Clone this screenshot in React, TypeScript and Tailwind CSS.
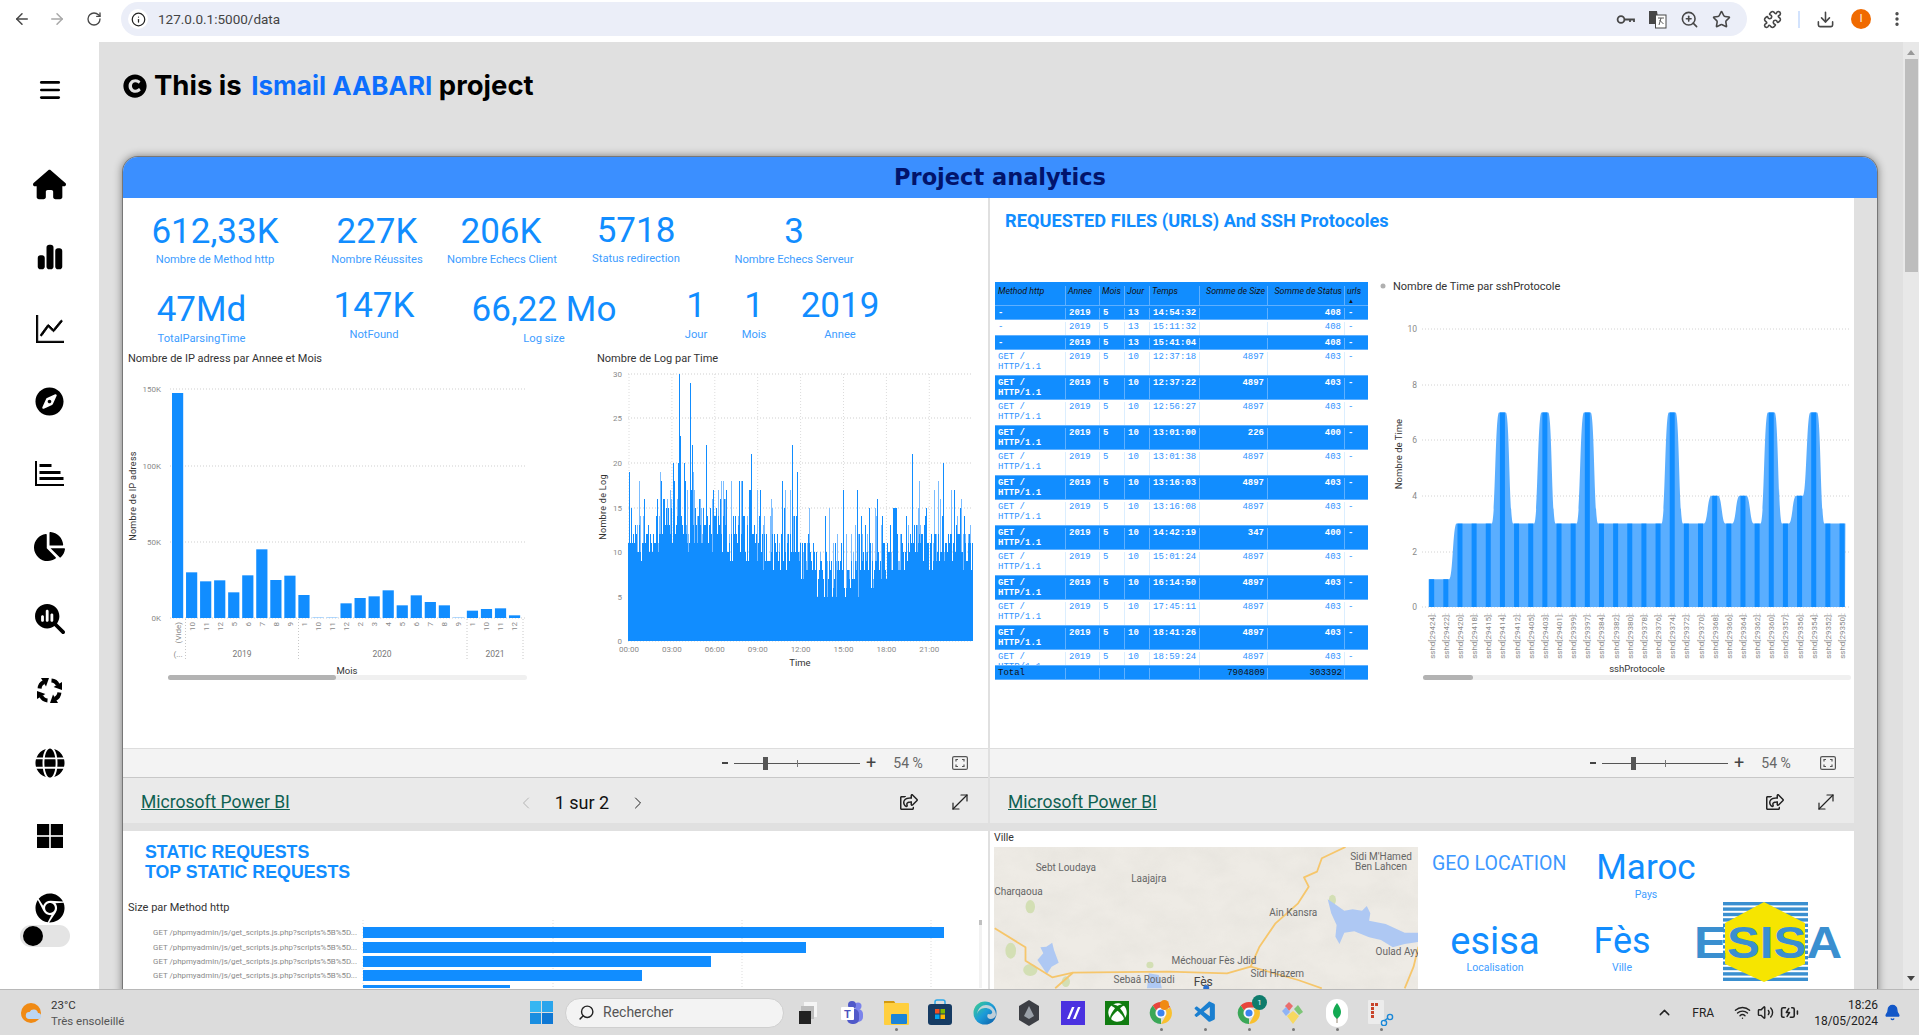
import React from "react";
import { ArrowLeft, ArrowRight, RotateCw, Info, ZoomIn, Star, Puzzle, Download, EllipsisVertical, MoveDiagonal, ChevronLeft, ChevronRight, ChevronUp, Wifi, Volume2, BatteryCharging, Bell, Search, Menu } from "lucide-react";
import { FaCompass, FaChartPie, FaGlobe, FaChrome, FaCopyright, FaRegShareSquare, FaXbox } from "react-icons/fa";
import { FaHouse, FaChartSimple, FaMagnifyingGlassChart } from "react-icons/fa6";
import { BsGraphUp } from "react-icons/bs";
import { VscVscode } from "react-icons/vsc";

const BLUE = "#118dff";

/* ---------- data ---------- */
const barTops = [580 - 1200, 397, 424, 421, 457, 406, 328, 420, 407, 465, 532, 532, 490, 474, 469, 451, 496, 466, 486, 496, 532, 512, 507, 505, 526];
const barLabels = ["(Vide)", "10", "11", "12", "5", "6", "7", "8", "9", "1", "10", "11", "12", "2", "3", "4", "5", "6", "7", "8", "9", "1", "10", "11", "12"];
const sshIds = [29424, 29422, 29420, 29418, 29415, 29414, 29412, 29405, 29403, 29401, 29399, 29397, 29384, 29382, 29380, 29378, 29376, 29374, 29372, 29370, 29368, 29366, 29364, 29362, 29360, 29357, 29356, 29354, 29352, 29350];
const sshVals = [1, 1, 3, 3, 3, 7, 3, 3, 7, 3, 3, 7, 3, 3, 3, 3, 3, 7, 3, 3, 4, 3, 4, 3, 7, 3, 4, 7, 3, 3];

const sshX = (i: number) => 1370 + (185 + 42.45 * i) / 3;
const sshY = (v: number) => 607 - 27.8 * v;
function areaPath() {
  let d = `M${sshX(0) - 3} 607 L${sshX(0) - 3} ${sshY(sshVals[0])}`;
  sshVals.forEach((v, i) => {
    const x = sshX(i);
    d += ` L${x + 3.4} ${sshY(v)}`;
    if (i < sshVals.length - 1) {
      const nx = sshX(i + 1) - 3.4;
      const ny = sshY(sshVals[i + 1]);
      const mx = (x + 3.4 + nx) / 2;
      d += ` C${mx} ${sshY(v)} ${mx} ${ny} ${nx} ${ny}`;
    }
  });
  d += ` L${sshX(29) + 3} 607 Z`;
  return d;
}

let seed = 12345;
const rnd = () => {
  seed = (seed * 1103515245 + 12345) & 0x7fffffff;
  return seed / 0x7fffffff;
};
function envelope(t: number) {
  const pts: [number, number][] = [[0, 10.5], [0.07, 12], [0.13, 14], [0.25, 12.5], [0.35, 11.5], [0.42, 11], [0.48, 11], [0.55, 8], [0.65, 7.5], [0.72, 9], [0.8, 11], [0.9, 11.5], [1, 11]];
  for (let i = 0; i < pts.length - 1; i++) {
    if (t <= pts[i + 1][0]) {
      const k = (t - pts[i][0]) / (pts[i + 1][0] - pts[i][0]);
      return pts[i][1] + (pts[i + 1][1] - pts[i][1]) * k;
    }
  }
  return 9;
}
const logY = (v: number) => 641 - 8.9 * v;
let logDark = "";
let logLight = "";
for (let x = 628.5; x < 973; x += 1) {
  const t = (x - 628) / 345;
  const e = envelope(t);
  const v = Math.round(e + (rnd() - 0.6) * 5);
  const r = rnd();
  const spike = Math.round(v + r * r * r * 8);
  logDark += `M${x} 641V${logY(Math.max(v, 3))}`;
  if (spike > v) (rnd() > 0.5 ? (logDark += `M${x} ${logY(v)}V${logY(spike)}`) : (logLight += `M${x} ${logY(v)}V${logY(spike)}`));
}
logDark += `M679.5 641V${logY(30)}M680.5 641V${logY(23)}M690.5 641V${logY(29)}M692.5 641V${logY(22)}M706.5 641V${logY(22)}M792.5 641V${logY(22)}M912.5 641V${logY(21)}M943.5 641V${logY(20)}`;

type Row = [string, number, number, string, string, string];
const rows: Row[] = [
  ["-", 5, 13, "14:54:32", "", "408"],
  ["-", 5, 13, "15:11:32", "", "408"],
  ["-", 5, 13, "15:41:04", "", "408"],
  ["GET / HTTP/1.1", 5, 10, "12:37:18", "4897", "403"],
  ["GET / HTTP/1.1", 5, 10, "12:37:22", "4897", "403"],
  ["GET / HTTP/1.1", 5, 10, "12:56:27", "4897", "403"],
  ["GET / HTTP/1.1", 5, 10, "13:01:00", "226", "400"],
  ["GET / HTTP/1.1", 5, 10, "13:01:38", "4897", "403"],
  ["GET / HTTP/1.1", 5, 10, "13:16:03", "4897", "403"],
  ["GET / HTTP/1.1", 5, 10, "13:16:08", "4897", "403"],
  ["GET / HTTP/1.1", 5, 10, "14:42:19", "347", "400"],
  ["GET / HTTP/1.1", 5, 10, "15:01:24", "4897", "403"],
  ["GET / HTTP/1.1", 5, 10, "16:14:50", "4897", "403"],
  ["GET / HTTP/1.1", 5, 10, "17:45:11", "4897", "403"],
  ["GET / HTTP/1.1", 5, 10, "18:41:26", "4897", "403"],
  ["GET / HTTP/1.1", 5, 10, "18:59:24", "4897", "403"],
];

/* ---------- small parts ---------- */
function Stat({ value, label, w, valueClass = "", labelClass = "mt-[3px]" }: { value: string; label: string; w: string; valueClass?: string; labelClass?: string }) {
  return (
    <div className={`${w} shrink-0 text-center`}>
      <div className={`text-[35px] leading-[36px] text-[#118dff] ${valueClass}`}>{value}</div>
      <div className={`text-[11.2px] leading-[14px] text-[#3d9dff] whitespace-nowrap ${labelClass}`}>{label}</div>
    </div>
  );
}

function ZoomBar({ pr }: { pr: string }) {
  return (
    <div className={`h-[29px] bg-[#f3f3f3] border-t border-[#dddddd] flex items-center justify-end ${pr}`}>
      <span className="w-[6px] h-[2px] bg-[#444444] mr-[6px]" />
      <div className="relative w-[126px] h-px bg-[#555555] mr-[6px]">
        <span className="absolute left-[29px] -top-[6px] w-[5px] h-[13px] bg-[#555555]" />
        <span className="absolute left-[63px] -top-[3px] w-px h-[7px] bg-[#777777]" />
      </div>
      <span className="text-[18px] leading-none text-[#444444] w-[10px] text-center mr-[17px]">+</span>
      <span className="text-[14px] text-[#666666] w-[30px] text-center mr-[29px]">54 %</span>
      <svg width="16" height="14" viewBox="0 0 16 14" fill="none" stroke="#555" strokeWidth="1.2">
        <rect x="0.6" y="0.6" width="14.8" height="12.8" rx="1.5" />
        <path d="M6 3.5H4V5.5M10 3.5H12V5.5M6 10.5H4V8.5M10 10.5H12V8.5" />
      </svg>
    </div>
  );
}

function PbiBar({ pager, pl, pr }: { pager?: boolean; pl: string; pr: string }) {
  return (
    <div className={`h-[46px] bg-[#eaeaea] border-t border-[#c8c8c8] flex items-center pt-[5px] ${pl} ${pr}`}>
      <a className="text-[17.5px] text-[#0f6152] underline leading-none w-[150px] whitespace-nowrap">Microsoft Power BI</a>
      {pager && (
        <div className="flex items-center ml-[225px] -mt-[1px]">
          <ChevronLeft size={20} strokeWidth={1} className="text-[#aaaaaa]" />
          <span className="text-[18px] text-[#111111] w-[92px] text-center">1 sur 2</span>
          <ChevronRight size={20} strokeWidth={1.2} className="text-[#222222]" />
        </div>
      )}
      <div className="ml-auto flex items-center gap-[30px] -mt-[3px]">
        <FaRegShareSquare size={18} className="text-[#222222]" />
        <MoveDiagonal size={24} strokeWidth={1.2} className="text-[#222222]" />
      </div>
    </div>
  );
}

function BarChart() {
  const xs = barTops.map((_, i) => 172 + i * 14.04);
  return (
    <svg width="467" height="320" viewBox="123 366 467 320" className="block" fontFamily="Roboto, sans-serif">
      {[[389, "150K"], [466, "100K"], [542, "50K"], [618, "0K"]].map(([y, l]) => (
        <g key={String(l)}>
          <line x1="170" x2="525" y1={y as number} y2={y as number} stroke="#cfcfcf" strokeWidth="1" strokeDasharray="1 2" />
          <text x="161" y={(y as number) + 3} fontSize="8" fill="#8a8a8a" textAnchor="end">{l}</text>
        </g>
      ))}
      {barTops.map((t, i) => {
        const top = i === 0 ? 393 : 440 + t / 3;
        return <rect key={i} x={xs[i]} y={top} width="11.2" height={618 - top} fill={i === 10 || i === 11 || i === 20 ? "#8cc6ff" : BLUE} />;
      })}
      {barLabels.map((l, i) => (
        <text key={i} transform={`translate(${xs[i] + 8.5} 622) rotate(-90)`} fontSize="8" fill="#8a8a8a" textAnchor="end">{l}</text>
      ))}
      {[185.5, 298.5, 467, 523].map((x) => (
        <line key={x} x1={x} x2={x} y1="619" y2="661" stroke="#c8c8c8" strokeDasharray="1 2" />
      ))}
      <text x="178" y="657" fontSize="8" fill="#8a8a8a" textAnchor="middle">(...</text>
      <text x="242" y="657" fontSize="8.5" fill="#777" textAnchor="middle">2019</text>
      <text x="382" y="657" fontSize="8.5" fill="#777" textAnchor="middle">2020</text>
      <text x="495" y="657" fontSize="8.5" fill="#777" textAnchor="middle">2021</text>
      <text x="347" y="674" fontSize="9.5" fill="#333" textAnchor="middle">Mois</text>
      <rect x="168" y="675" width="359" height="5" rx="2.5" fill="#f0f0f0" />
      <rect x="168" y="675" width="168" height="5" rx="2.5" fill="#b3b3b3" />
      <text transform="translate(136 496) rotate(-90)" fontSize="9" fill="#333" textAnchor="middle" letterSpacing="0.3">Nombre de IP adress</text>
    </svg>
  );
}

function LogChart() {
  const times = ["00:00", "03:00", "06:00", "09:00", "12:00", "15:00", "18:00", "21:00"];
  return (
    <svg width="398" height="320" viewBox="590 366 398 320" className="block" fontFamily="Roboto, sans-serif">
      {[[374, "30"], [418, "25"], [463, "20"], [508, "15"], [552, "10"], [597, "5"], [641, "0"]].map(([y, l]) => (
        <g key={String(l)}>
          <line x1="628" x2="973" y1={y as number} y2={y as number} stroke="#cfcfcf" strokeDasharray="1 2" />
          <text x="622" y={(y as number) + 3} fontSize="8" fill="#8a8a8a" textAnchor="end">{l}</text>
        </g>
      ))}
      {times.map((t, i) => (
        <g key={t}>
          <line x1={629 + i * 42.9} x2={629 + i * 42.9} y1="374" y2="641" stroke="#dcdcdc" strokeDasharray="1 2" />
          <text x={629 + i * 42.9} y="652" fontSize="8" fill="#8a8a8a" textAnchor="middle">{t}</text>
        </g>
      ))}
      <path d={logLight} stroke="#7cbdff" strokeWidth="1" fill="none" shapeRendering="crispEdges" />
      <path d={logDark} stroke={BLUE} strokeWidth="1" fill="none" shapeRendering="crispEdges" />
      <text x="800" y="666" fontSize="9.5" fill="#333" textAnchor="middle">Time</text>
      <text transform="translate(606 507) rotate(-90)" fontSize="9" fill="#333" textAnchor="middle" letterSpacing="0.3">Nombre de Log</text>
    </svg>
  );
}

function SshChart() {
  return (
    <svg width="486" height="400" viewBox="1368 282 486 400" className="block" fontFamily="Roboto, sans-serif">
      <circle cx="1383" cy="286" r="2.5" fill="#b0b0b0" />
      <text x="1393" y="290" fontSize="11" fill="#333">Nombre de Time par sshProtocole</text>
      {[[329, "10"], [385, "8"], [440, "6"], [496, "4"], [552, "2"], [607, "0"]].map(([y, l]) => (
        <g key={String(l)}>
          <line x1="1422" x2="1849" y1={y as number} y2={y as number} stroke="#d2d2d2" strokeDasharray="1 2" />
          <text x="1417" y={(y as number) + 3} fontSize="8.5" fill="#8a8a8a" textAnchor="end">{l}</text>
        </g>
      ))}
      <path d={areaPath()} fill="#5aaeff" />
      {sshVals.map((v, i) => (
        <rect key={i} x={sshX(i) - 2.5} y={sshY(v)} width="5" height={607 - sshY(v)} fill={BLUE} />
      ))}
      {sshIds.map((id, i) => (
        <text key={id} transform={`translate(${sshX(i) + 3} 613) rotate(-90)`} fontSize="8" fill="#8a8a8a" textAnchor="end">{`sshd[${id}]:`}</text>
      ))}
      <text x="1637" y="672" fontSize="9.5" fill="#333" textAnchor="middle">sshProtocole</text>
      <rect x="1423" y="675" width="428" height="5" rx="2.5" fill="#f0f0f0" />
      <rect x="1423" y="675" width="50" height="5" rx="2.5" fill="#b3b3b3" />
      <text transform="translate(1402 454) rotate(-90)" fontSize="9.5" fill="#333" textAnchor="middle">Nombre de Time</text>
    </svg>
  );
}

const gridCols = "grid grid-cols-[71px_34px_25px_25px_50px_68px_77px_23px]";

function LogTable() {
  const head = "border-r border-[#5fb0ff] px-[2px]";
  return (
    <div className="w-[373px] ml-[5px] shrink-0 text-[9px] leading-[10px] font-['Liberation_Mono',monospace]">
      <div className={`${gridCols} h-[23px] bg-[#118dff] text-[#111111] italic font-['Roboto',sans-serif] leading-[11px] pt-[4px] text-[8.8px] whitespace-nowrap`}>
        <span className={`${head} pl-[3px]`}>Method http</span>
        <span className={head}>Annee</span>
        <span className={head}>Mois</span>
        <span className={head}>Jour</span>
        <span className={head}>Temps</span>
        <span className={`${head} text-right`}>Somme de Size</span>
        <span className={`${head} text-right`}>Somme de Status</span>
        <span className="px-[2px] relative">urls<span className="absolute left-[3px] top-[12px] text-[6px] leading-none">▲</span></span>
      </div>
      <div className="h-[360px] overflow-hidden flex flex-col">
        {rows.map((r, i) => {
          const on = i % 2 === 0;
          const cell = `border-r ${on ? "border-[#5fb0ff]" : "border-[#dbeeff]"} px-[3px] overflow-hidden`;
          return (
            <div
              key={i}
              className={`${gridCols} ${i < 3 ? "h-[15px]" : "h-[25px]"} shrink-0 pt-[2px] ${on ? "bg-[#118dff] text-white font-bold border-y border-[#5fb0ff]" : "bg-white text-[#2f93ff]"}`}
            >
              <span className={cell}>{r[0]}</span>
              <span className={cell}>2019</span>
              <span className={cell}>{r[1]}</span>
              <span className={cell}>{r[2]}</span>
              <span className={cell}>{r[3]}</span>
              <span className={`${cell} text-right`}>{r[4]}</span>
              <span className={`${cell} text-right`}>{r[5]}</span>
              <span className="px-[3px]">-</span>
            </div>
          );
        })}
      </div>
      <div className={`${gridCols} h-[15px] bg-[#118dff] text-[#111111] pt-[2px] border-y border-[#5fb0ff]`}>
        <span className={`${head} pl-[3px]`}>Total</span>
        <span className={head} />
        <span className={head} />
        <span className={head} />
        <span className={head} />
        <span className={`${head} text-right`}>7904809</span>
        <span className={`${head} text-right`}>303392</span>
        <span />
      </div>
    </div>
  );
}

const zx = (z: number) => 990 + z / 1.688;
const zy = (z: number) => 740 + z / 3;
const mp = (pts: number[][], close = false) =>
  pts.map((p, i) => `${i ? "L" : "M"}${zx(p[0]).toFixed(1)} ${zy(p[1]).toFixed(1)}`).join(" ") + (close ? " Z" : "");

function MapView() {
  const labels: [string, number, number][] = [
    ["Sebt Loudaya", 128, 394],
    ["Laajajra", 268, 426],
    ["Charqaoua", 48, 466],
    ["Sidi M'Hamed", 660, 360],
    ["Ben Lahcen", 660, 390],
    ["Ain Kansra", 512, 527],
    ["Oulad Ayy", 688, 644],
    ["Méchouar Fès Jdid", 378, 672],
    ["Sidi Hrazem", 485, 712],
    ["Sebaâ Rouadi", 260, 730],
  ];
  return (
    <svg width="424" height="142" viewBox="994 847 424 142" className="block" fontFamily="Roboto, sans-serif">
      <defs>
        <filter id="hills" x="0" y="0" width="100%" height="100%">
          <feTurbulence type="fractalNoise" baseFrequency="0.03 0.045" numOctaves="4" seed="7" />
          <feColorMatrix values="0 0 0 0 0.6  0 0 0 0 0.59  0 0 0 0 0.55  0.8 0 0 0 -0.25" />
        </filter>
      </defs>
      <rect x="994" y="847" width="424" height="142" fill="#eeebe5" />
      <rect x="994" y="847" width="424" height="142" filter="url(#hills)" opacity="0.35" />
      {[[68, 500, 8, 10], [35, 632, 9, 12], [68, 690, 12, 9], [128, 725, 7, 8], [578, 480, 6, 8], [270, 675, 6, 5]].map((g, i) => (
        <ellipse key={i} cx={zx(g[0])} cy={zy(g[1])} rx={g[2] / 1.688} ry={g[3] / 1.5} fill="#d3dfb4" />
      ))}
      <path d={mp([[570, 478], [582, 492], [598, 512], [612, 508], [628, 512], [636, 498], [642, 520], [640, 542], [668, 552], [700, 578], [723, 578], [723, 606], [700, 612], [680, 622], [660, 600], [640, 592], [615, 574], [598, 578], [590, 612], [583, 590], [585, 555], [576, 520]], true)} fill="#aec8f3" />
      <path d={mp([[85, 622], [95, 620], [105, 608], [108, 630], [116, 668], [104, 680], [96, 702], [88, 680], [80, 660], [90, 640]], true)} fill="#aec8f3" />
      <path d={mp([[268, 700], [285, 705], [290, 745], [265, 745]], true)} fill="#aec8f3" />
      <g fill="none" stroke="#f6c66b" strokeWidth="1.8" strokeLinejoin="round">
        <path d={mp([[600, 321], [560, 355], [552, 395], [530, 412], [538, 440], [520, 490], [482, 550], [455, 620], [440, 680], [400, 700], [300, 695], [140, 698], [110, 745]])} />
        <path d={mp([[8, 565], [60, 622], [60, 662], [105, 712], [140, 698]])} />
        <path d={mp([[440, 680], [520, 720], [560, 745]])} />
        <path d={mp([[723, 620], [715, 680], [700, 745]])} />
      </g>
      {labels.map(([t, x, y]) => (
        <text key={t} x={zx(x)} y={zy(y)} fontSize="10" fill="#666" textAnchor="middle">{t}</text>
      ))}
      <text x={zx(360)} y={zy(738)} fontSize="12" fill="#444" textAnchor="middle">Fès</text>
      <circle cx={zx(365)} cy={zy(744)} r="3" fill="#2a6fd0" />
    </svg>
  );
}

function EsisaLogo() {
  const stripes = [];
  for (let y = 0; y < 80; y += 5.4) stripes.push(y);
  return (
    <svg width="148" height="80" viewBox="0 0 148 80" className="block shrink-0">
      {stripes.map((y) => (
        <rect key={y} x="29" y={y} width="85" height="3.4" fill="#3a8fd0" />
      ))}
      <polygon points="70,0 111,21 111,62 70,80 31,62 31,21" fill="#f6e500" />
      <text x="0" y="56" fontFamily="Liberation Sans, sans-serif" fontWeight="700" fontSize="45" fill="#3a8fd0" textLength="148" lengthAdjust="spacingAndGlyphs">ESISA</text>
    </svg>
  );
}

function LoopArrows() {
  return (
    <svg width="27" height="27" viewBox="0 0 27 27" className="text-black">
      {[0, 90, 180, 270].map((a) => (
        <g key={a} transform={`rotate(${a} 13.5 13.5)`}>
          <path d="M3.6 11.5C3.8 8.5 5.2 6.4 8 5.2" fill="none" stroke="currentColor" strokeWidth="4" />
          <path d="M5 1L13 1L10 9.4z" fill="currentColor" />
        </g>
      ))}
    </svg>
  );
}

function AxisBars() {
  return (
    <svg width="29" height="25" viewBox="0 0 29 25" fill="currentColor">
      <path d="M0 0H2V23H29V25H0Z" />
      <rect x="4.5" y="3" width="12" height="3" />
      <rect x="4.5" y="10" width="21" height="3" />
      <rect x="4.5" y="16" width="24" height="3" />
    </svg>
  );
}

/* ---------- taskbar icons ---------- */
function ChromeIcon({ size = 24 }: { size?: number }) {
  return (
    <svg width={size} height={size} viewBox="0 0 24 24">
      <path d="M12 1a11 11 0 0 1 9.5 5.5H12a5.5 5.5 0 0 0-5 3L3.7 4.6A11 11 0 0 1 12 1z" fill="#e8453c" />
      <path d="M21.5 6.5A11 11 0 0 1 12 23l4.7-8.2A5.5 5.5 0 0 0 16.5 9z" fill="#f9c02e" />
      <path d="M12 23A11 11 0 0 1 3.7 4.6L7 9.5a5.5 5.5 0 0 0 5 8z" fill="#3aa757" />
      <circle cx="12" cy="12" r="4.3" fill="#3b83ef" stroke="#fff" strokeWidth="1.4" />
    </svg>
  );
}

function TaskIcon({ children, dot = false, w }: { children: React.ReactNode; dot?: boolean; w: string }) {
  return (
    <div className={`${w} shrink-0 h-full relative flex items-center justify-center`}>
      {children}
      {dot && <span className="absolute bottom-[4px] left-1/2 -ml-[1.5px] w-[3px] h-[3px] rounded-full bg-[#777777]" />}
    </div>
  );
}

function Taskbar() {
  return (
    <div className="h-[46px] shrink-0 bg-[#dcdcdc] border-t border-[#b8b8b8] flex items-center relative z-10">
      <div className="w-[530px] shrink-0 flex items-center pl-[20px]">
        <svg width="24" height="24" viewBox="0 0 24 24" className="shrink-0">
          <circle cx="11" cy="12" r="10" fill="#f08a14" />
          <path d="M9 18a3.5 3.5 0 0 1 .6-7 4.5 4.5 0 0 1 8.4 1 3 3 0 0 1 .2 6z" fill="#bcd6f2" />
        </svg>
        <div className="ml-[7px] text-[11.5px] leading-[16px] text-[#333333]">
          <div>23°C</div>
          <div className="text-[#555555]">Très ensoleillé</div>
        </div>
      </div>
      <svg width="23" height="23" viewBox="0 0 23 23" className="shrink-0">
        <rect x="0" y="0" width="11" height="11" fill="#35b6f2" />
        <rect x="12" y="0" width="11" height="11" fill="#2aa5ec" />
        <rect x="0" y="12" width="11" height="11" fill="#1a8ee0" />
        <rect x="12" y="12" width="11" height="11" fill="#0f78d4" />
      </svg>
      <div className="ml-[12px] w-[219px] h-[30px] shrink-0 rounded-full bg-[#f3f3f3] border border-[#cfcfcf] flex items-center pl-[12px]">
        <Search size={17} strokeWidth={2} className="text-[#222222] -scale-x-100" />
        <span className="ml-[8px] text-[14px] text-[#555555]">Rechercher</span>
      </div>
      <div className="ml-[2px] h-full flex items-center">
        <TaskIcon w="w-[44px]">
          <svg width="20" height="24" viewBox="0 0 20 24">
            <rect x="6" y="1" width="13" height="15" fill="#f5f5f5" />
            <rect x="3" y="5" width="13" height="13" fill="#bdbdbd" />
            <rect x="1" y="10" width="12" height="13" fill="#222" />
          </svg>
        </TaskIcon>
        <TaskIcon w="w-[44px]">
          <svg width="26" height="26" viewBox="0 0 26 26">
            <circle cx="19" cy="6" r="3.5" fill="#7b83eb" />
            <rect x="12" y="9" width="12" height="13" rx="5" fill="#7b83eb" />
            <circle cx="13" cy="5" r="4" fill="#5059c9" />
            <rect x="8" y="9" width="12" height="15" rx="5" fill="#5059c9" />
            <rect x="2" y="7" width="13" height="13" rx="1" fill="#fff" />
            <text x="8.5" y="18" fontSize="11" fontWeight="700" fill="#4b53bc" textAnchor="middle" fontFamily="Roboto, sans-serif">T</text>
          </svg>
        </TaskIcon>
        <TaskIcon w="w-[44px]" dot>
          <svg width="25" height="26" viewBox="0 0 25 26">
            <path d="M0 1h10l2 3h-12z" fill="#d39a10" />
            <rect x="0" y="3" width="25" height="22" rx="1" fill="#ffcf3f" />
            <rect x="7" y="14" width="16" height="10" rx="1" fill="#1b84d8" />
          </svg>
        </TaskIcon>
        <TaskIcon w="w-[44px]">
          <svg width="24" height="27" viewBox="0 0 24 27">
            <path d="M7 6V3a2 2 0 0 1 2-2h6a2 2 0 0 1 2 2v3" fill="none" stroke="#28a8ea" strokeWidth="1.5" />
            <rect x="0" y="5" width="24" height="21" rx="3" fill="#163b63" />
            <rect x="7" y="10" width="4.5" height="4.5" fill="#f25022" />
            <rect x="12.5" y="10" width="4.5" height="4.5" fill="#7fba00" />
            <rect x="7" y="15.5" width="4.5" height="4.5" fill="#00a4ef" />
            <rect x="12.5" y="15.5" width="4.5" height="4.5" fill="#ffb900" />
          </svg>
        </TaskIcon>
        <TaskIcon w="w-[45px]">
          <svg width="24" height="24" viewBox="0 0 24 24">
            <defs>
              <linearGradient id="edgeG" x1="0" y1="0" x2="1" y2="1">
                <stop offset="0" stopColor="#3fd28a" />
                <stop offset="0.5" stopColor="#1c9bd8" />
                <stop offset="1" stopColor="#0c59a4" />
              </linearGradient>
            </defs>
            <circle cx="12" cy="12" r="11.5" fill="url(#edgeG)" />
            <path d="M23 14c-1 4-6 5-8 3-1-1-1-3 0-4 1 0 3 1 4-1 1-2-2-5-7-5-4 0-7 3-8 6 1-6 5-9 9-9 6 0 10 5 10 10z" fill="#dcdcdc" opacity="0.85" />
          </svg>
        </TaskIcon>
        <TaskIcon w="w-[44px]">
          <svg width="22" height="26" viewBox="0 0 22 26">
            <path d="M11 0l10 6v14l-10 6-10-6V6z" fill="#3d3f45" />
            <path d="M11 6l5 10-5 3-5-3z" fill="#9aa0a8" />
          </svg>
        </TaskIcon>
        <TaskIcon w="w-[44px]">
          <svg width="24" height="24" viewBox="0 0 24 24">
            <rect width="24" height="24" fill="#4b32e0" />
            <path d="M6 18l5-12h2.5L8.5 18zM12 18l5-12h2.5l-5 12z" fill="#fff" />
          </svg>
        </TaskIcon>
        <TaskIcon w="w-[44px]">
          <div className="w-[24px] h-[24px] bg-[#107c10] flex items-center justify-center">
            <FaXbox size={19} className="text-white" />
          </div>
        </TaskIcon>
        <TaskIcon w="w-[44px]" dot>
          <div className="relative">
            <ChromeIcon />
            <span className="absolute -top-[1px] right-[4px] w-[9px] h-[10px] rounded-full bg-[#f08a14]" />
          </div>
        </TaskIcon>
        <TaskIcon w="w-[44px]" dot>
          <VscVscode size={25} className="text-[#1a7fd0]" />
        </TaskIcon>
        <TaskIcon w="w-[44px]" dot>
          <div className="relative">
            <ChromeIcon />
            <span className="absolute -top-[6px] -right-[6px] w-[15px] h-[15px] rounded-full bg-[#0f7c6c] text-white text-[8px] leading-[15px] text-center">1</span>
          </div>
        </TaskIcon>
        <TaskIcon w="w-[44px]" dot>
          <svg width="26" height="26" viewBox="0 0 26 26">
            <path d="M9 2l4 4-4 5-4-5z" fill="#ea6d6d" />
            <path d="M2 11l4-4 4 5-4 4z" fill="#8fb3f5" />
            <path d="M14 9l4-4 5 7-4 3z" fill="#7cc576" />
            <path d="M7 16l6-5 6 5-6 8z" fill="#f6d860" />
          </svg>
        </TaskIcon>
        <TaskIcon w="w-[44px]" dot>
          <div className="w-[22px] h-[28px] rounded-full bg-white flex items-center justify-center">
            <svg width="10" height="20" viewBox="0 0 10 20">
              <path d="M5 0c3 4 4 7 4 9 0 4-3 6-4 7-1-1-4-3-4-7 0-2 1-5 4-9z" fill="#13aa52" />
              <rect x="4.6" y="15" width="0.8" height="5" fill="#7a6a4f" />
            </svg>
          </div>
        </TaskIcon>
        <TaskIcon w="w-[44px]" dot>
          <svg width="26" height="26" viewBox="0 0 26 26">
            <rect x="0" y="0" width="16" height="24" rx="1" fill="#ececec" />
            <path d="M3 3h3v3H3zM7 3h3v3H7zM3 7h3v3H3zM3 11h3v3H3zM3 15h3v3H3z" fill="#c8452c" />
            <circle cx="22" cy="17" r="2.6" fill="none" stroke="#1a88d8" strokeWidth="1.4" />
            <circle cx="16" cy="23" r="2.6" fill="none" stroke="#1a88d8" strokeWidth="1.4" />
            <path d="M20 18l-4 3" stroke="#1a88d8" strokeWidth="1.4" />
          </svg>
        </TaskIcon>
      </div>
      <div className="ml-auto flex items-center pr-[18px]">
        <ChevronUp size={17} className="text-[#222222]" />
        <span className="ml-[19px] text-[12px] text-[#222222]">FRA</span>
        <Wifi size={17} className="ml-[20px] text-[#222222]" />
        <Volume2 size={17} className="ml-[6px] text-[#222222]" />
        <BatteryCharging size={19} className="ml-[6px] text-[#222222]" />
        <div className="ml-[15px] text-right text-[12px] leading-[16px] text-[#222222]">
          <div>18:26</div>
          <div>18/05/2024</div>
        </div>
        <Bell size={17} fill="#1257c8" className="ml-[6px] text-[#1257c8]" />
      </div>
    </div>
  );
}

/* ---------- browser / page ---------- */
function Toolbar() {
  return (
    <div className="h-[42px] shrink-0 bg-white flex items-center relative">
      <div className="flex items-center pl-[13px] -mt-[4px]">
        <ArrowLeft size={18} strokeWidth={2} className="text-[#474747]" />
        <ArrowRight size={18} strokeWidth={2} className="ml-[17px] text-[#a8a8a8]" />
        <RotateCw size={16} strokeWidth={2} className="ml-[20px] text-[#474747]" />
      </div>
      <div className="ml-[19px] w-[1626px] h-[34px] -mt-[4px] shrink-0 rounded-full bg-[#ebeef8] flex items-center pl-[6px]">
        <div className="w-[20px] h-[20px] rounded-full bg-white flex items-center justify-center ml-[1px]">
          <Info size={15} strokeWidth={2} className="text-[#222222]" />
        </div>
        <span className="ml-[10px] text-[13.5px] text-[#444444]">127.0.0.1:5000/data</span>
        <div className="ml-auto flex items-center gap-[13px] pr-[16px] text-[#474747]">
          <svg width="19" height="19" viewBox="0 0 19 19" fill="none" stroke="currentColor" strokeWidth="1.8">
            <circle cx="5" cy="9.5" r="3.4" />
            <path d="M8.5 9.5H18V12M14 9.5V12" />
          </svg>
          <svg width="19" height="19" viewBox="0 0 19 19">
            <path d="M1 1h8l2 13H1z" fill="#474747" />
            <rect x="7.5" y="5" width="10.5" height="13" fill="#fff" stroke="#474747" strokeWidth="1" />
            <path d="M10 8h6M13 8l-2 7M11.5 10l4 4" stroke="#474747" strokeWidth="0.9" />
          </svg>
          <ZoomIn size={19} strokeWidth={2} />
          <Star size={19} strokeWidth={2} />
        </div>
      </div>
      <div className="ml-[16px] flex items-center -mt-[4px] text-[#474747]">
        <Puzzle size={19} strokeWidth={2} />
        <span className="ml-[16px] w-[2px] h-[17px] bg-[#d3e3fd]" />
        <Download size={19} strokeWidth={2} className="ml-[16px]" />
        <span className="ml-[16px] w-[20px] h-[20px] rounded-full bg-[#f06a00] text-white text-[10px] leading-[20px] text-center">I</span>
        <EllipsisVertical size={18} strokeWidth={2.5} className="ml-[17px]" />
      </div>
    </div>
  );
}

function Sidebar() {
  const icons = [
    <FaHouse size={33} />,
    <FaChartSimple size={28} />,
    <BsGraphUp size={28} stroke="currentColor" strokeWidth={0.5} />,
    <FaCompass size={29} />,
    <AxisBars />,
    <FaChartPie size={31} />,
    <FaMagnifyingGlassChart size={30} />,
    <LoopArrows />,
    <FaGlobe size={30} />,
    <svg width="26" height="24" viewBox="0 0 26 24" fill="currentColor">
      <rect x="0" y="0" width="12.2" height="11.2" />
      <rect x="13.8" y="0" width="12.2" height="11.2" />
      <rect x="0" y="12.8" width="12.2" height="11.2" />
      <rect x="13.8" y="12.8" width="12.2" height="11.2" />
    </svg>,
    <FaChrome size={30} />,
  ];
  return (
    <div className="w-[99px] shrink-0 bg-white flex flex-col items-center text-black">
      <Menu size={26} strokeWidth={2.5} className="mt-[35px]" />
      <div className="mt-[45px] flex flex-col items-center">
        {icons.map((ic, i) => (
          <div key={i} className="h-[72.4px] flex items-center justify-center">{ic}</div>
        ))}
      </div>
      <div className="-mt-[19px] -ml-[10px] w-[50px] h-[22px] rounded-full bg-[#e4e4e4] relative shrink-0">
        <span className="absolute left-[3px] top-[1px] w-[20px] h-[20px] rounded-full bg-black" />
      </div>
    </div>
  );
}

export default function App() {
  const staticLabel = "GET /phpmyadmin/js/get_scripts.js.php?scripts%5B%5D...";
  const hbars = [[928, 944], [943, 806], [957, 711], [971, 642], [986, 510]];
  return (
    <div className="w-[1919px] h-[1035px] overflow-hidden flex flex-col bg-[#e0e0e0] font-['Roboto',sans-serif]">
      <Toolbar />
      <div className="flex-1 min-h-0 flex overflow-hidden">
        <Sidebar />
        <main className="flex-1 min-w-0 overflow-hidden pl-[23px] pr-[25px]">
          <div className="h-[114px] flex items-center gap-[7px] pb-[26px] pl-[1px]">
            <FaCopyright size={24} className="text-black" />
            <h1 className="text-[27.5px] leading-none font-bold text-black font-['Inter',sans-serif]">
              This is <span className="ml-[3px] text-[26px] text-[#0d6efd]">Ismail AABARI</span> project
            </h1>
          </div>
          <section className="border border-[#777777] border-b-0 rounded-t-[16px] overflow-hidden shadow-[0_0_8px_rgba(0,0,0,0.45)] bg-[#e0e0e0]">
            <div className="h-[41px] bg-[#3b8fff] flex items-center justify-center">
              <h2 className="text-[22.5px] font-bold text-[#02146b] font-['DejaVu_Sans',sans-serif]">Project analytics</h2>
            </div>
            <div className="flex gap-[2px] h-[800px] pr-[23px]">
              {/* left column */}
              <div className="w-[865px] shrink-0">
                <div className="h-[550px] bg-white overflow-hidden pt-[16px]">
                  <div className="flex">
                    <Stat w="w-[184px]" value="612,33K" label="Nombre de Method http" />
                    <Stat w="w-[140px]" value="227K" label="Nombre  Réussites" />
                    <Stat w="w-[108px]" value="206K" label="Nombre Echecs Client" />
                    <Stat w="w-[162px]" value="5718" label="Status redirection" valueClass="-mt-[1px]" />
                    <Stat w="w-[154px]" value="3" label="Nombre Echecs Serveur" />
                  </div>
                  <div className="flex mt-[21px]">
                    <Stat w="w-[157px]" value="47Md" label="TotalParsingTime" valueClass="mt-[4px]" labelClass="mt-[4px]" />
                    <Stat w="w-[188px]" value="147K" label="NotFound" labelClass="mt-[4px]" />
                    <Stat w="w-[152px]" value="66,22 Mo" label="Log size" valueClass="mt-[4px]" labelClass="mt-[4px]" />
                    <div className="w-[46px] shrink-0" />
                    <Stat w="w-[60px]" value="1" label="Jour" labelClass="mt-[4px]" />
                    <Stat w="w-[56px]" value="1" label="Mois" labelClass="mt-[4px]" />
                    <Stat w="w-[116px]" value="2019" label="Annee" labelClass="mt-[4px]" />
                  </div>
                  <div className="flex mt-[6px]">
                    <div className="w-[467px] shrink-0">
                      <div className="pl-[5px] text-[11px] leading-[14px] text-[#333333]">Nombre de IP adress par Annee et Mois</div>
                      <BarChart />
                    </div>
                    <div className="w-[398px] shrink-0">
                      <div className="pl-[7px] text-[11px] leading-[14px] text-[#333333]">Nombre de Log par Time</div>
                      <LogChart />
                    </div>
                  </div>
                </div>
                <ZoomBar pr="pr-[20px]" />
                <PbiBar pager pl="pl-[18px]" pr="pr-[16px]" />
                <div className="mt-[8px] h-[158px] bg-white overflow-hidden pt-[11px]">
                  <div className="pl-[22px] text-[17.8px] leading-[20px] font-bold text-[#118dff] font-['Liberation_Sans',sans-serif]">
                    <div>STATIC REQUESTS</div>
                    <div>TOP STATIC REQUESTS</div>
                  </div>
                  <div className="mt-[19px] pl-[5px] text-[11px] leading-[14px] text-[#333333]">Size par Method http</div>
                  <svg width="865" height="73" viewBox="123 916 865 73" className="block" fontFamily="Roboto, sans-serif">
                    {[363, 553, 742, 931].map((x) => (
                      <line key={x} x1={x} x2={x} y1="921" y2="989" stroke="#dddddd" strokeDasharray="1 2" />
                    ))}
                    {hbars.map(([y, x2]) => (
                      <g key={y}>
                        <text x="357" y={y + 8} fontSize="8" fill="#8a8a8a" textAnchor="end" textLength="204" lengthAdjust="spacingAndGlyphs">{staticLabel}</text>
                        <rect x="363" y={y} width={x2 - 363} height="11" fill={BLUE} />
                      </g>
                    ))}
                    <rect x="979" y="921" width="3" height="68" fill="#f2f2f2" />
                    <rect x="979" y="921" width="3" height="5" fill="#c0c0c0" />
                  </svg>
                </div>
              </div>
              {/* right column */}
              <div className="w-[864px] shrink-0">
                <div className="h-[550px] bg-white overflow-hidden pt-[11px]">
                  <h3 className="pl-[15px] text-[18.2px] leading-[24px] font-bold text-[#118dff]">REQUESTED FILES (URLS) And SSH Protocoles</h3>
                  <div className="flex mt-[49px]">
                    <LogTable />
                    <SshChart />
                  </div>
                </div>
                <ZoomBar pr="pr-[18px]" />
                <PbiBar pl="pl-[18px]" pr="pr-[16px]" />
                <div className="mt-[8px] h-[158px] bg-white overflow-hidden flex">
                  <div className="w-[428px] shrink-0 pl-[4px]">
                    <div className="h-[16px] text-[10.5px] leading-[14px] text-[#333333]">Ville</div>
                    <MapView />
                  </div>
                  <div className="flex-1 pt-[16px]">
                    <div className="flex h-[55px]">
                      <div className="w-[149px] shrink-0 pl-[14px] pt-[5px] text-[19.5px] leading-[24px] text-[#3d98ff] whitespace-nowrap">GEO LOCATION</div>
                      <div className="w-[158px] shrink-0 text-center">
                        <div className="text-[35px] leading-[41px] text-[#118dff]">Maroc</div>
                        <div className="text-[10.5px] leading-[14px] text-[#3d9dff]">Pays</div>
                      </div>
                    </div>
                    <div className="flex">
                      <div className="w-[154px] shrink-0 text-center pt-[19px]">
                        <div className="text-[38px] leading-[40px] text-[#118dff]">esisa</div>
                        <div className="text-[10.5px] leading-[14px] text-[#3d9dff]">Localisation</div>
                      </div>
                      <div className="w-[100px] shrink-0 text-center pt-[19px]">
                        <div className="text-[36px] leading-[40px] text-[#118dff]">Fès</div>
                        <div className="text-[10.5px] leading-[14px] text-[#3d9dff]">Ville</div>
                      </div>
                      <div className="ml-[22px]"><EsisaLogo /></div>
                    </div>
                  </div>
                </div>
              </div>
            </div>
          </section>
        </main>
        <div className="w-[16px] shrink-0 bg-[#e8e8e8] flex flex-col items-center">
          <span className="mt-[8px] w-0 h-0 border-x-[4px] border-x-transparent border-b-[5px] border-b-[#999999]" />
          <div className="mt-[4px] w-[13px] h-[213px] bg-[#bdbdbd]" />
          <span className="mt-auto mb-[8px] w-0 h-0 border-x-[4px] border-x-transparent border-t-[5px] border-t-[#444444]" />
        </div>
      </div>
      <Taskbar />
    </div>
  );
}
